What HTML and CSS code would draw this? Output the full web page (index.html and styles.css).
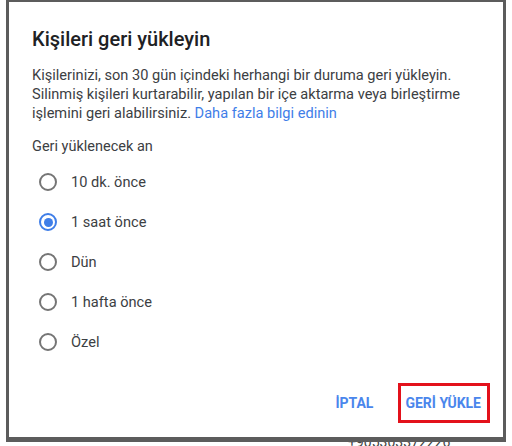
FILE: index.html
```html
<!DOCTYPE html>
<html lang="tr">
<head>
    <meta charset="UTF-8">
    <meta name="viewport" content="width=device-width, initial-scale=1.0">
    <title>Kişileri geri yükleyin</title>
    <link rel="stylesheet" href="styles.css">
</head>
<body>

    <!-- Restore dialog -->
    <div class="dialog">
        <h2 class="dialog-title">Kişileri geri yükleyin</h2>
        <p class="dialog-text">
            Kişilerinizi, son 30 gün içindeki herhangi bir duruma geri yükleyin.<br>
            Silinmiş kişileri kurtarabilir, yapılan bir içe aktarma veya birleştirme<br>
            işlemini geri alabilirsiniz. <a href="#" class="link">Daha fazla bilgi edinin</a>
        </p>

        <p class="group-label">Geri yüklenecek an</p>

        <div class="options">
            <label class="option"><span class="radio"></span>10 dk. önce</label>
            <label class="option"><span class="radio checked"></span>1 saat önce</label>
            <label class="option"><span class="radio"></span>Dün</label>
            <label class="option"><span class="radio"></span>1 hafta önce</label>
            <label class="option"><span class="radio"></span>Özel</label>
        </div>

        <div class="actions">
            <button class="btn">İPTAL</button>
            <button class="btn btn-marked">GERİ YÜKLE</button>
        </div>
    </div>

    <div class="under">+905303372226</div>

</body>
</html>
```

FILE: styles.css
```css
/* General Styling */
body {
    font-family: 'Roboto', 'Liberation Sans', sans-serif;
    margin: 0;
    padding: 0;
    background: #fff;
    color: #333;
    overflow: hidden;
}

/* Dialog frame */
.dialog {
    position: relative;
    z-index: 1;
    box-sizing: border-box;
    width: 500px;
    height: 442px;
    margin-left: 6px;
    padding: 23px 13px 14px 23px;
    background: #fff;
    border: 3px solid #5c5c5c;
    border-top-width: 2px;
    border-bottom-width: 5px;
    display: flex;
    flex-direction: column;
}

.dialog-title {
    margin: 0;
    font-size: 20px;
    line-height: 28px;
    font-weight: 500;
    color: #202124;
}

.dialog-text {
    margin: 13px 0 0;
    font-size: 14.6px;
    line-height: 19px;
    color: #3c4043;
}

.link {
    color: #3f7ee8;
    text-decoration: none;
}

.group-label {
    margin: 14px 0 0;
    font-size: 14.5px;
    line-height: 20px;
    color: #3c4043;
}

/* Radio list */
.options {
    display: flex;
    flex-direction: column;
    margin-top: 5px;
    padding-left: 7px;
}

.option {
    display: flex;
    align-items: center;
    gap: 14px;
    height: 40px;
    font-size: 14.6px;
    color: #3c4043;
}

.radio {
    box-sizing: border-box;
    width: 18px;
    height: 18px;
    border: 2px solid #757575;
    border-radius: 50%;
    display: flex;
    align-items: center;
    justify-content: center;
}

.radio.checked {
    border-color: #3f7ee8;
}

.radio.checked::after {
    content: '';
    width: 9px;
    height: 9px;
    border-radius: 50%;
    background: #3f7ee8;
}

/* Buttons */
.actions {
    margin-top: auto;
    display: flex;
    justify-content: flex-end;
    align-items: center;
    gap: 15px;
}

.btn {
    font-family: inherit;
    font-size: 14px;
    font-weight: 700;
    color: #4a86ec;
    background: none;
    border: 3px solid transparent;
    height: 40px;
    padding: 0 7px;
    cursor: pointer;
}

.btn-marked {
    border-color: #e3111b;
    padding: 0 6px 0 4px;
}

/* Text peeking out under the dialog */
.under {
    margin-top: -8px;
    padding-left: 348px;
    font-size: 14px;
    line-height: 16px;
    color: #444;
}
```
